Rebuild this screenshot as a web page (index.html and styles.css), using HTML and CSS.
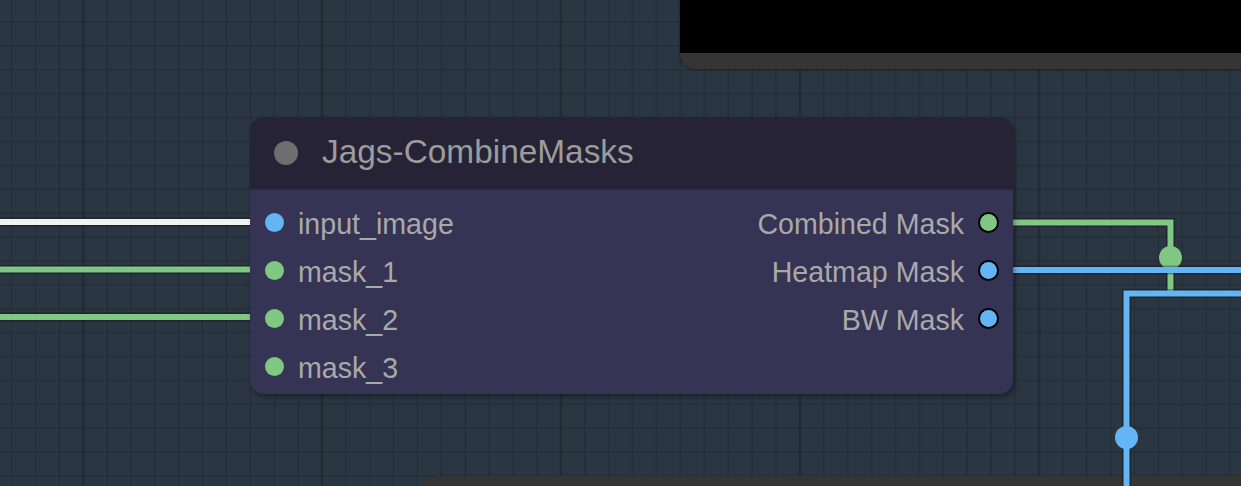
FILE: index.html
```html
<!DOCTYPE html>
<html>
<head>
<meta charset="utf-8">
<link rel="stylesheet" href="styles.css">
</head>
<body>
<div class="canvas">
  <div class="panel-top"><div class="panel-top-screen"></div></div>
  <div class="panel-bottom"></div>

  <svg class="wires" width="1241" height="486" viewBox="0 0 1241 486">
    <g fill="none" stroke-linecap="butt" stroke-linejoin="miter">
      <path class="wire-edge" d="M0 222 H252"/>
      <path d="M0 222 H252" stroke="#f2f2f2" stroke-width="6"/>
      <path class="wire-edge" d="M0 269.5 H252"/>
      <path d="M0 269.5 H252" stroke="#81c784" stroke-width="6"/>
      <path class="wire-edge" d="M0 317 H252"/>
      <path d="M0 317 H252" stroke="#81c784" stroke-width="6"/>

      <path class="wire-edge" d="M1010 222.5 H1170.5 V294"/>
      <path d="M1010 222.5 H1170.5 V294" stroke="#81c784" stroke-width="6"/>
      <circle cx="1170.5" cy="257.5" r="11.5" fill="#81c784"/>

      <path class="wire-edge" d="M1010 270 H1241"/>
      <path d="M1010 270 H1241" stroke="#64b5f6" stroke-width="6"/>
      <path class="wire-edge" d="M1241 293.5 H1126.5 V486"/>
      <path d="M1241 293.5 H1126.5 V486" stroke="#64b5f6" stroke-width="6"/>
      <circle cx="1126.5" cy="437.5" r="11.5" fill="#64b5f6"/>
    </g>
  </svg>

  <div class="node">
    <div class="node-title">
      <span class="title-dot"></span>
      <span class="title-text">Jags-CombineMasks</span>
    </div>
    <div class="node-body">
      <div class="col col-in">
        <div class="slot"><span class="dot dot-blue"></span><span class="label">input_image</span></div>
        <div class="slot"><span class="dot dot-green"></span><span class="label">mask_1</span></div>
        <div class="slot"><span class="dot dot-green"></span><span class="label">mask_2</span></div>
        <div class="slot"><span class="dot dot-green"></span><span class="label">mask_3</span></div>
      </div>
      <div class="col col-out">
        <div class="slot"><span class="label">Combined Mask</span><span class="dot out dot-green"></span></div>
        <div class="slot"><span class="label">Heatmap Mask</span><span class="dot out dot-blue"></span></div>
        <div class="slot"><span class="label">BW Mask</span><span class="dot out dot-blue"></span></div>
      </div>
    </div>
  </div>
</div>
</body>
</html>
```

FILE: styles.css
```css
* { box-sizing: border-box; }
html, body { margin: 0; padding: 0; }
body {
  width: 1241px;
  height: 486px;
  overflow: hidden;
  font-family: "Liberation Sans", Arial, sans-serif;
}
.canvas {
  position: relative;
  width: 1241px;
  height: 486px;
  overflow: hidden;
  background-color: #2a3641;
  background-image:
    linear-gradient(to right, rgba(0,0,0,0.1) 3px, transparent 3px),
    linear-gradient(to right, rgba(0,0,0,0.1) 2px, transparent 2px),
    linear-gradient(to bottom, rgba(0,0,0,0.1) 2px, transparent 2px);
  background-size: 239px 100%, 23.9px 23.9px, 23.9px 23.9px;
  background-position: 81.5px 0, 10.5px 0, 0 21px;
}
.wires {
  position: absolute;
  left: 0;
  top: 0;
}
.wire-edge {
  stroke: rgba(0,0,0,0.3);
  stroke-width: 9;
}
.panel-top {
  position: absolute;
  left: 680px;
  top: 0;
  width: 600px;
  height: 69px;
  background: #353535;
  border-bottom-left-radius: 16px;
  box-shadow: 0 1px 3px rgba(0,0,0,0.3);
}
.panel-top-screen {
  height: 53px;
  background: #000;
}
.panel-bottom {
  position: absolute;
  left: 422px;
  top: 476px;
  width: 900px;
  height: 40px;
  background: #353535;
  border-top-left-radius: 16px;
}
.node {
  position: absolute;
  left: 250px;
  top: 117px;
  width: 763px;
  height: 277px;
  border-radius: 14px;
  overflow: hidden;
  background: #353454;
  box-shadow: 2px 3px 5px rgba(0,0,0,0.35);
  display: flex;
  flex-direction: column;
}
.node-title {
  height: 73px;
  background: #252335;
  display: flex;
  align-items: center;
  padding-left: 24px;
  border-bottom: 1px solid #2d2b42;
}
.title-dot {
  width: 24px;
  height: 24px;
  border-radius: 50%;
  background: #6e6e6e;
  flex: none;
  margin-top: -1px;
}
.title-text {
  margin-left: 24px;
  font-size: 33.4px;
  color: #9c9c9c;
  margin-top: -3px;
}
.node-body {
  flex: 1;
  display: flex;
  justify-content: space-between;
  padding: 8px 14px 0 14px;
}
.col {
  display: flex;
  flex-direction: column;
}
.col-out { align-items: flex-end; }
.slot {
  height: 48px;
  display: flex;
  align-items: center;
}
.label {
  font-size: 28.6px;
  color: #a9a9a9;
  line-height: 1;
  margin-top: 4px;
}
.col-in .label { margin-left: 14px; }
.col-out .label { margin-right: 14px; }
.dot {
  width: 19px;
  height: 19px;
  border-radius: 50%;
  flex: none;
  margin-left: 1px;
}
.dot.out {
  width: 21px;
  height: 21px;
  border: 2px solid #000;
  margin: 0;
}
.dot-green { background: #81c784; }
.dot-blue { background: #64b5f6; }
```
